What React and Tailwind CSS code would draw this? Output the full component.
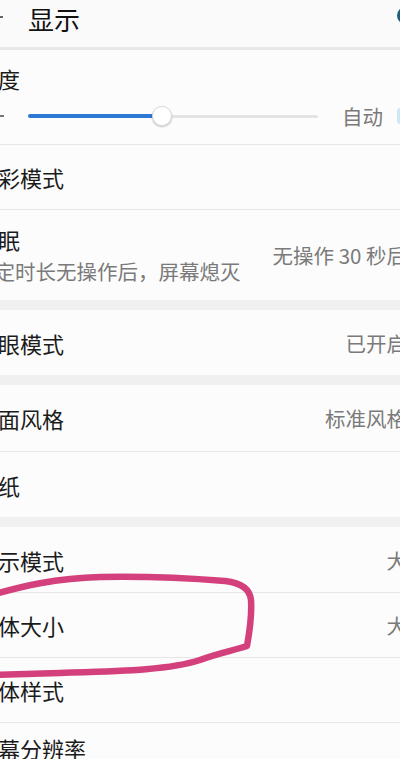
import React from "react";

const label = "text-[22px] leading-[32px] text-[#1b1b1b] whitespace-nowrap";
const value = "text-[20.5px] leading-[30px] text-[#7a7a7a] whitespace-nowrap";

function Row({ title, val, h, border = true }) {
  return (
    <div
      className={`flex items-center justify-between bg-[#fcfcfc] pr-[39px] ${h} ${
        border ? "border-b border-[#e6e6e6]" : ""
      }`}
    >
      <span className={label}>{title}</span>
      {val ? <span className={value}>{val}</span> : null}
    </div>
  );
}

export default function App() {
  return (
    <div className="relative w-[400px] h-[759px] overflow-hidden bg-[#f0f0f0] font-['Noto_Sans_CJK_SC','Noto_Sans',sans-serif]">
      {/* header */}
      <div className="flex items-start h-[47px] bg-[#fafafa]">
        <div className="mt-[16px] w-[3px] h-[2px] bg-[#666]" />
        <div className="ml-[25px] mt-[3px] text-[26px] leading-[32px] text-[#111]">显示</div>
        <div className="ml-auto mt-[7px] mr-[-14px] w-[17px] h-[17px] rounded-full border-[3px] border-[#1f5f78]" />
      </div>
      <div className="h-[3px] bg-[#e8e8e8]" />

      <div className="ml-[-24px] w-[470px]">
        {/* brightness */}
        <div className="h-[95px] bg-[#fcfcfc] border-b border-[#e6e6e6] pt-[12px]">
          <div className={label}>亮度</div>
          <div className="flex items-center h-[32px] mt-[6px]">
            <div className="w-[28px] flex items-center justify-end">
              <div className="w-[4px] h-[2px] bg-[#777]" />
            </div>
            <div className="relative ml-[24px] w-[290px] h-[4px] flex items-center">
              <div className="w-[126px] h-[4px] bg-[#2d78d2] rounded-l-full" />
              <div className="flex-1 h-[3px] bg-[#e4e4e4] rounded-r-full" />
              <div className="absolute left-[124px] top-[-8px] w-[20px] h-[20px] rounded-full bg-white border border-[#dcdcdc] shadow-[0_1px_2px_rgba(0,0,0,0.25)]" />
            </div>
            <span className={`${value} ml-[24px]`}>自动</span>
            <div className="ml-[14px] w-[10px] h-[16px] rounded-[3px] bg-[#cde8f5]" />
          </div>
        </div>

        <Row title="色彩模式" h="h-[65px]" />

        {/* sleep */}
        <div className="flex items-center justify-between h-[90px] bg-[#fcfcfc] pr-[39px]">
          <div className="self-start pt-[13px]">
            <div className={label}>休眠</div>
            <div className="text-[20.5px] leading-[32px] text-[#7a7a7a] whitespace-nowrap ml-[-2px]">
              设定时长无操作后，屏幕熄灭
            </div>
          </div>
          <span className={value}>无操作 30 秒后</span>
        </div>

        <div className="h-[10px] bg-[#f0f0f0]" />
        <Row title="护眼模式" val="已开启" h="h-[65px]" border={false} />
        <div className="h-[10px] bg-[#f0f0f0]" />
        <Row title="桌面风格" val="标准风格" h="h-[67px]" />
        <Row title="壁纸" h="h-[65px]" border={false} />
        <div className="h-[10px] bg-[#f0f0f0]" />
        <Row title="显示模式" val="大" h="h-[66px]" />
        <Row title="字体大小" val="大" h="h-[65px]" />
        <Row title="字体样式" h="h-[65px]" />
        <div className="flex items-center justify-between h-[80px] bg-[#fcfcfc] pr-[39px]">
          <div className="self-start pt-[9px]">
            <div className={label}>屏幕分辨率</div>
          </div>
          <span className={`${value} mt-[18px]`}>智能</span>
        </div>
      </div>

      {/* hand-drawn annotation */}
      <svg
        className="absolute left-0 top-0 pointer-events-none"
        width="400"
        height="759"
        viewBox="0 0 400 759"
      >
        <path
          d="M -5 594 C 20 587 55 578 100 577 C 150 576 200 579 225 581 C 243 583 250 590 251 600 C 252 615 249 635 247 646 C 235 650 215 654 200 660 C 170 670 120 671 60 673 L -5 675"
          fill="none"
          stroke="#d4407c"
          strokeWidth="6.5"
          strokeLinecap="round"
          strokeLinejoin="round"
        />
      </svg>
    </div>
  );
}
